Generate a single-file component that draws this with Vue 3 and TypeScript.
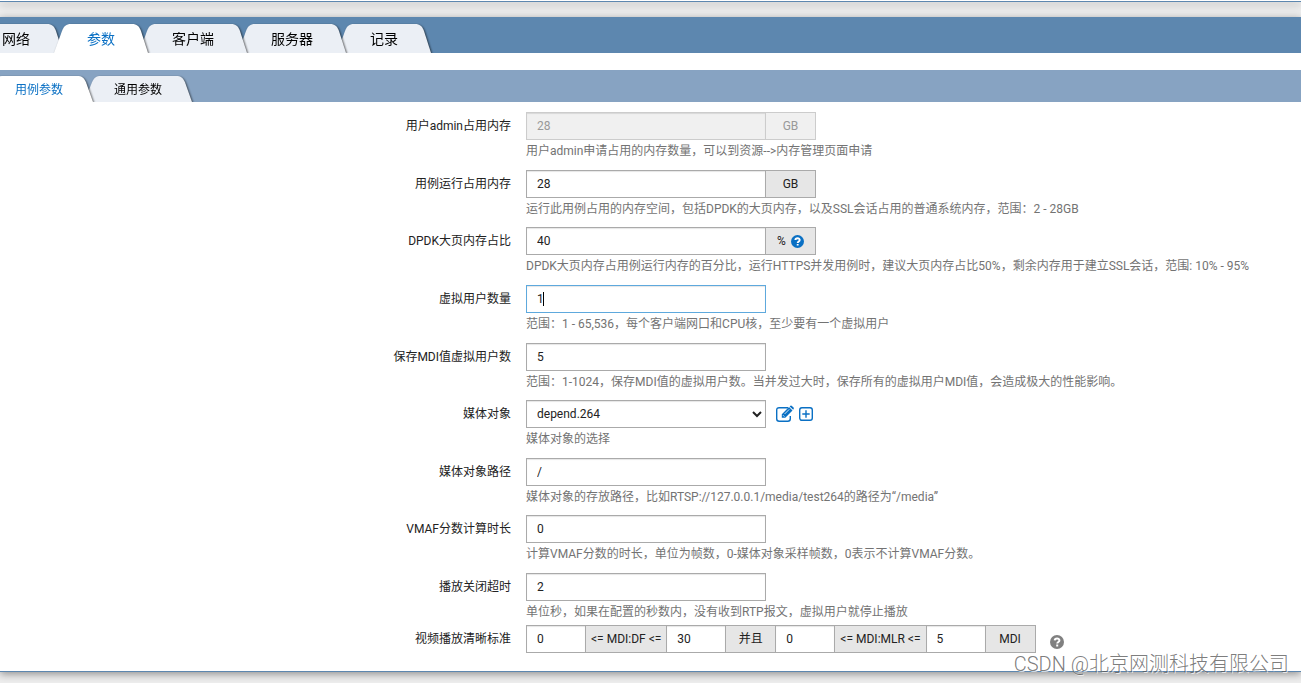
<script setup lang="ts">
import { reactive } from 'vue'

interface Tab {
  label: string
  active?: boolean
}

interface Field {
  id: string
  label: string
  help: string
  unit?: string
  hint?: boolean
  disabled?: boolean
  focused?: boolean
  options?: string[]
}

const mainTabs: Tab[] = [
  { label: '网络' },
  { label: '参数', active: true },
  { label: '客户端' },
  { label: '服务器' },
  { label: '记录' },
]

const subTabs: Tab[] = [{ label: '用例参数', active: true }, { label: '通用参数' }]

const fields: Field[] = [
  { id: 'userMemory', label: '用户admin占用内存', unit: 'GB', disabled: true, help: '用户admin申请占用的内存数量，可以到资源-->内存管理页面申请' },
  { id: 'caseMemory', label: '用例运行占用内存', unit: 'GB', help: '运行此用例占用的内存空间，包括DPDK的大页内存，以及SSL会话占用的普通系统内存，范围：2 - 28GB' },
  { id: 'hugePages', label: 'DPDK大页内存占比', unit: '%', hint: true, help: 'DPDK大页内存占用例运行内存的百分比，运行HTTPS并发用例时，建议大页内存占比50%，剩余内存用于建立SSL会话，范围: 10% - 95%' },
  { id: 'users', label: '虚拟用户数量', focused: true, help: '范围：1 - 65,536，每个客户端网口和CPU核，至少要有一个虚拟用户' },
  { id: 'mdiUsers', label: '保存MDI值虚拟用户数', help: '范围：1-1024，保存MDI值的虚拟用户数。当并发过大时，保存所有的虚拟用户MDI值，会造成极大的性能影响。' },
  { id: 'media', label: '媒体对象', options: ['depend.264'], help: '媒体对象的选择' },
  { id: 'mediaPath', label: '媒体对象路径', help: '媒体对象的存放路径，比如RTSP://127.0.0.1/media/test264的路径为“/media”' },
  { id: 'vmaf', label: 'VMAF分数计算时长', help: '计算VMAF分数的时长，单位为帧数，0-媒体对象采样帧数，0表示不计算VMAF分数。' },
  { id: 'timeout', label: '播放关闭超时', help: '单位秒，如果在配置的秒数内，没有收到RTP报文，虚拟用户就停止播放' },
]

const form = reactive<Record<string, string>>({
  userMemory: '28',
  caseMemory: '28',
  hugePages: '40',
  users: '1',
  mdiUsers: '5',
  media: 'depend.264',
  mediaPath: '/',
  vmaf: '0',
  timeout: '2',
  dfMin: '0',
  dfMax: '30',
  mlrMin: '0',
  mlrMax: '5',
})

// Tabs on the left overlap the ones to their right; the active one is above all.
const layer = (tab: Tab, index: number, count: number) => (tab.active ? count + 1 : count - index)
</script>

<template>
  <div class="page">
    <div class="previous"></div>
    <main class="panel">
      <nav class="tabs main-tabs" aria-label="主菜单">
        <button
          v-for="(tab, i) in mainTabs"
          :key="tab.label"
          type="button"
          class="tab"
          :class="{ active: tab.active }"
          :style="{ zIndex: layer(tab, i, mainTabs.length) }"
        >
          <svg class="cap" viewBox="0 0 20 29" preserveAspectRatio="none"><path d="M20 0H17C12 0 10 2 8 7L0 29H20Z" /></svg>
          <span class="tab-label">{{ tab.label }}</span>
          <svg class="cap" viewBox="0 0 20 29" preserveAspectRatio="none"><path d="M0 0H4C9 0 11 2 13 7L20 29H0Z" /></svg>
        </button>
      </nav>
      <nav class="tabs sub-tabs" aria-label="参数菜单">
        <button
          v-for="(tab, i) in subTabs"
          :key="tab.label"
          type="button"
          class="tab"
          :class="{ active: tab.active }"
          :style="{ zIndex: layer(tab, i, subTabs.length) }"
        >
          <svg class="cap" viewBox="0 0 20 29" preserveAspectRatio="none"><path d="M20 0H17C12 0 10 2 8 7L0 29H20Z" /></svg>
          <span class="tab-label">{{ tab.label }}</span>
          <svg class="cap" viewBox="0 0 20 29" preserveAspectRatio="none"><path d="M0 0H4C9 0 11 2 13 7L20 29H0Z" /></svg>
        </button>
      </nav>

      <form class="form" @submit.prevent>
        <div v-for="f in fields" :key="f.id" class="row">
          <label class="label" :for="f.id">{{ f.label }}</label>
          <div class="content">
            <div class="controls">
              <select v-if="f.options" :id="f.id" v-model="form[f.id]" class="box">
                <option v-for="o in f.options" :key="o">{{ o }}</option>
              </select>
              <div v-else class="field">
                <input :id="f.id" v-model="form[f.id]" type="text" class="box" :class="{ focused: f.focused }" :disabled="f.disabled" />
                <span v-if="f.focused" class="caret"></span>
              </div>
              <span v-if="f.unit" class="addon" :class="{ muted: f.disabled }">
                {{ f.unit }}
                <svg v-if="f.hint" class="hint" viewBox="0 0 14 14">
                  <circle cx="7" cy="7" r="7" />
                  <path d="M4.7 5.4C4.8 2.8 9.5 2.8 9.4 5.4C9.4 7 7.2 6.9 7.2 8.6M7.2 9.6V11.4" />
                </svg>
              </span>
              <div v-if="f.options" class="actions">
                <button type="button" class="icon-button" aria-label="编辑">
                  <svg viewBox="0 0 18 16" width="18" height="16">
                    <path class="line" d="M12 1.700H3.200Q.7 1.700 .7 4.200V12.800Q.7 15.300 3.200 15.300H11.800Q14.300 15.300 14.300 12.800V10" />
                    <path class="solid" d="M5.800 8.200L13 1L16.500 4.500L9.300 11.700H5.800ZM13.700 .4L14.400-.2Q15.200-.8 15.900-.1L17.600 1.600Q18.200 2.300 17.600 3L17.200 3.800Z" />
                    <path class="gap" d="M8.600 8L13.200 3.400M7 9.200L8.400 10.600" />
                  </svg>
                </button>
                <button type="button" class="icon-button" aria-label="新增">
                  <svg viewBox="0 0 14 16" width="14" height="16">
                    <rect class="line" x=".7" y="1.700" width="12.600" height="12.600" rx="2.200" />
                    <path class="line" d="M3.300 8H10.700M7 4.300V11.700" />
                  </svg>
                </button>
              </div>
            </div>
            <p class="help">{{ f.help }}</p>
          </div>
        </div>
        <div class="row last">
          <label class="label" for="dfMin">视频播放清晰标准</label>
          <div class="controls">
            <input id="dfMin" v-model="form.dfMin" type="text" class="box short" />
            <span class="addon range">&lt;= MDI:DF &lt;=</span>
            <input v-model="form.dfMax" type="text" class="box short" aria-label="MDI:DF 上限" />
            <span class="addon">并且</span>
            <input v-model="form.mlrMin" type="text" class="box short" aria-label="MDI:MLR 下限" />
            <span class="addon range">&lt;= MDI:MLR &lt;=</span>
            <input v-model="form.mlrMax" type="text" class="box short" aria-label="MDI:MLR 上限" />
            <span class="addon">MDI</span>
            <button type="button" class="icon-button help-button" aria-label="帮助">
              <svg class="hint" viewBox="0 0 14 14">
                <circle cx="7" cy="7" r="7" />
                <path d="M4.7 5.4C4.8 2.8 9.5 2.8 9.4 5.4C9.4 7 7.2 6.9 7.2 8.6M7.2 9.6V11.4" />
              </svg>
            </button>
          </div>
        </div>
      </form>
      <div class="watermark">CSDN @北京网测科技有限公司</div>
    </main>
  </div>
</template>

<style>
html {
  background: #ededed;
}
</style>

<style scoped>
.page {
  overflow: hidden;
  padding-bottom: 11px;
  font: 12px/18px Roboto, "Noto Sans CJK SC", sans-serif;
  color: #222;
}
.previous {
  height: 1px;
  margin-bottom: 15px;
  background: #fff;
  border-bottom: 1px solid #5d87af;
  box-shadow: 0 2px 8px rgba(0, 0, 0, 0.4);
}
.panel {
  position: relative;
  background: #fff;
  border-bottom: 1px solid #5d87af;
  box-shadow: 0 2px 8px rgba(0, 0, 0, 0.4);
}
.tabs {
  display: flex;
  overflow: hidden;
}
.main-tabs {
  padding-top: 7px;
  background: #5d87af;
  font-size: 14px;
}
.sub-tabs {
  margin-top: 17px;
  padding-top: 6px;
  background: #87a3c2;
}
.tab {
  --fill: #ebeff5;
  position: relative;
  display: flex;
  flex: none;
  height: 29px;
  margin: 0 0 0 -9px;
  padding: 0;
  border: 0;
  background: none;
  font: inherit;
  color: #000;
  filter: drop-shadow(1px 1px 1px rgba(0, 0, 0, 0.7));
}
.main-tabs .tab:first-child {
  margin-left: -31px;
}
.sub-tabs .tab {
  height: 26px;
}
.sub-tabs .tab:first-child {
  margin-left: -15px;
}
.tab.active {
  --fill: #fff;
  color: #0a70c4;
}
.cap {
  width: 20px;
  height: 100%;
  fill: var(--fill);
}
.tab-label {
  box-sizing: border-box;
  display: flex;
  align-items: center;
  height: 100%;
  padding: 0 13px;
  background: var(--fill);
}
.sub-tabs .tab-label {
  padding: 2px 10px 0;
}
.form {
  padding: 10px 0 18px;
}
.row {
  display: grid;
  grid-template-columns: minmax(120px, 511px) minmax(0, 1fr);
  column-gap: 15px;
  margin-bottom: 9px;
}
.row:nth-last-child(2) {
  margin-bottom: 3px;
}
.row.last {
  margin-bottom: 0;
}
.label {
  line-height: 28px;
  text-align: right;
}
.controls {
  display: flex;
  height: 28px;
}
.field {
  position: relative;
}
.box {
  box-sizing: border-box;
  width: 240px;
  height: 28px;
  margin: 0;
  padding: 0 10px;
  border: 1px solid #aaa;
  border-radius: 0;
  background: #fff;
  box-shadow: inset 0 1px 1px rgba(0, 0, 0, 0.1);
  font: inherit;
  color: #222;
  outline: 0;
}
select.box {
  padding: 0 0 0 6px;
}
.box:disabled {
  border-color: #ccc;
  background: #f0f0f0;
  color: #999;
}
.box.focused {
  border-color: #5ea9dd;
}
.box.short {
  width: 60px;
}
.caret {
  position: absolute;
  left: 17px;
  top: 7px;
  width: 1px;
  height: 14px;
  background: #000;
}
.addon {
  box-sizing: border-box;
  display: flex;
  align-items: center;
  justify-content: center;
  gap: 5px;
  min-width: 51px;
  margin-left: -1px;
  border: 1px solid #aaa;
  background: #e6e6e6;
}
.addon.muted {
  border-color: #ccc;
  background: #f0f0f0;
  color: #999;
}
.range {
  padding: 0 5px;
}
.addon + .box {
  margin-left: -1px;
}
.hint {
  width: 13px;
  height: 13px;
  fill: #0a70c4;
}
.hint path {
  fill: none;
  stroke: #fff;
  stroke-width: 2;
}
.actions {
  display: flex;
  align-items: center;
  gap: 5px;
  margin-left: 10px;
}
.icon-button {
  display: flex;
  padding: 0;
  border: 0;
  background: none;
}
.icon-button svg {
  overflow: visible;
}
.line {
  fill: none;
  stroke: #0a70c4;
  stroke-width: 1.4;
}
.solid {
  fill: #0a70c4;
}
.gap {
  fill: none;
  stroke: #fff;
  stroke-width: 0.8;
}
.help-button {
  align-self: flex-end;
  margin: 0 0 4px 14px;
}
.help-button .hint {
  width: 14px;
  height: 14px;
  fill: #808080;
}
.help {
  margin: 3px 0 0;
  line-height: 1.47;
  color: #737373;
}
.watermark {
  position: absolute;
  right: 12px;
  bottom: -8px;
  font-size: 20px;
  line-height: 30px;
  font-weight: 300;
  color: rgba(90, 90, 90, 0.8);
  text-shadow: 1px 1px 0 rgba(255, 255, 255, 0.7);
  white-space: nowrap;
  pointer-events: none;
}
</style>
